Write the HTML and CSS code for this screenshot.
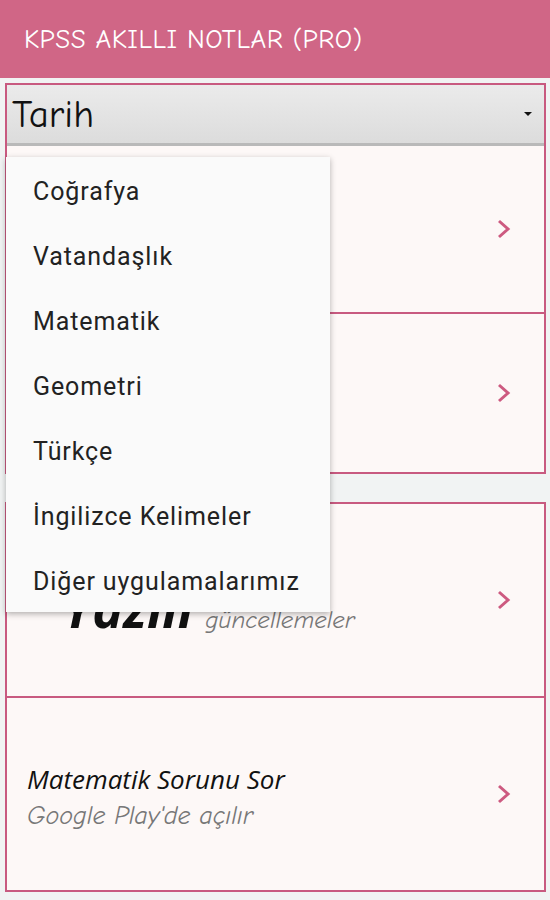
FILE: index.html
```html
<!DOCTYPE html>
<html>
  <head>
    <title>KPSS Akıllı Notlar</title>
    <link rel="stylesheet" href="styles.css">
  </head>
  <body>
    <div class="appbar">
      <h1>KPSS AKILLI NOTLAR (PRO)</h1>
    </div>

    <div class="group">
      <div class="spinner">
        <span class="spinner-text">Tarih</span>
        <span class="spinner-arrow"></span>
      </div>
      <div class="item item-tall">
        <div class="item-text"></div>
        <svg class="chevron" viewBox="0 0 14 20"><path d="M2 2 L11 10 L2 18" /></svg>
      </div>
      <div class="item">
        <div class="item-text"></div>
        <svg class="chevron" viewBox="0 0 14 20"><path d="M2 2 L11 10 L2 18" /></svg>
      </div>
    </div>

    <div class="group">
      <div class="item item-big">
        <div class="big-line">
          <span class="big-title">Yazılı</span>
          <span class="big-sub">güncellemeler</span>
        </div>
        <svg class="chevron" viewBox="0 0 14 20"><path d="M2 2 L11 10 L2 18" /></svg>
      </div>
      <div class="item item-big">
        <div class="item-text">
          <div class="item-title">Matematik Sorunu Sor</div>
          <div class="item-sub">Google Play'de açılır</div>
        </div>
        <svg class="chevron" viewBox="0 0 14 20"><path d="M2 2 L11 10 L2 18" /></svg>
      </div>
    </div>

    <!-- open spinner popup -->
    <ul class="popup">
      <li>Coğrafya</li>
      <li>Vatandaşlık</li>
      <li>Matematik</li>
      <li>Geometri</li>
      <li>Türkçe</li>
      <li>İngilizce Kelimeler</li>
      <li>Diğer uygulamalarımız</li>
    </ul>
  </body>
</html>
```

FILE: styles.css
```css
body {
  margin: 0;
  background: #f1f3f3;
  font-family: "Open Sans", "Noto Sans", sans-serif;
  position: relative;
  height: 900px;
  overflow: hidden;
}

/* top bar */
.appbar {
  background: #d06686;
  height: 78px;
  display: flex;
  align-items: center;
  padding-left: 24px;
}
.appbar h1 {
  margin: 0;
  color: #fff;
  font-family: "Comic Sans MS", "Comic Neue", cursive;
  font-weight: normal;
  font-size: 27px;
  letter-spacing: 0.5px;
}

/* bordered groups */
.group {
  margin: 5px 4px 0 5px;
  border: 2px solid #c85a80;
  background: #fdf8f7;
}
.group + .group {
  margin-top: 28px;
}

.spinner {
  height: 58px;
  background: linear-gradient(180deg, #ebebeb, #dcdcdc);
  border-bottom: 3px solid #b9b9b9;
  display: flex;
  align-items: center;
  justify-content: space-between;
  padding: 0 12px 0 5px;
}
.spinner-text {
  font-family: "Comic Sans MS", "Comic Neue", cursive;
  font-size: 39px;
  color: #111;
}
.spinner-arrow {
  width: 0;
  height: 0;
  border-left: 4px solid transparent;
  border-right: 4px solid transparent;
  border-top: 4px solid #111;
}

.item {
  height: 158px;
  display: flex;
  align-items: center;
  justify-content: space-between;
  padding: 0 33px 0 20px;
}
.item + .item {
  border-top: 2px solid #c85a80;
}
.item-tall {
  height: 166px;
}
.item-big {
  height: 192px;
}
.item-text {
  margin-top: 4px;
}
.item-title {
  font-style: italic;
  font-size: 26px;
  color: #111;
}
.item-sub {
  font-family: "Comic Sans MS", "Comic Neue", cursive;
  font-style: italic;
  font-size: 26px;
  color: #777;
  margin-top: 4px;
}

.big-line {
  display: flex;
  align-items: baseline;
  gap: 12px;
  padding-left: 36px;
  margin-top: 14px;
}
.big-title {
  font-size: 52px;
  font-style: italic;
  font-weight: bold;
  color: #111;
}
.big-sub {
  font-family: "Comic Sans MS", "Comic Neue", cursive;
  font-style: italic;
  font-size: 25px;
  color: #777;
}

.chevron {
  width: 14px;
  height: 20px;
  fill: none;
  stroke: #cd5a80;
  stroke-width: 3;
}

/* dropdown list */
.popup {
  position: absolute;
  top: 157px;
  left: 6px;
  width: 324px;
  height: 455px;
  margin: 0;
  padding: 2px 0 0;
  list-style: none;
  background: #fafafa;
  box-shadow: 0 2px 6px rgba(0, 0, 0, 0.3);
  box-sizing: border-box;
}
.popup li {
  height: 65px;
  display: flex;
  align-items: center;
  padding-left: 27px;
  font-family: Roboto, sans-serif;
  font-size: 25px;
  letter-spacing: 0.9px;
  color: #222;
}
```
